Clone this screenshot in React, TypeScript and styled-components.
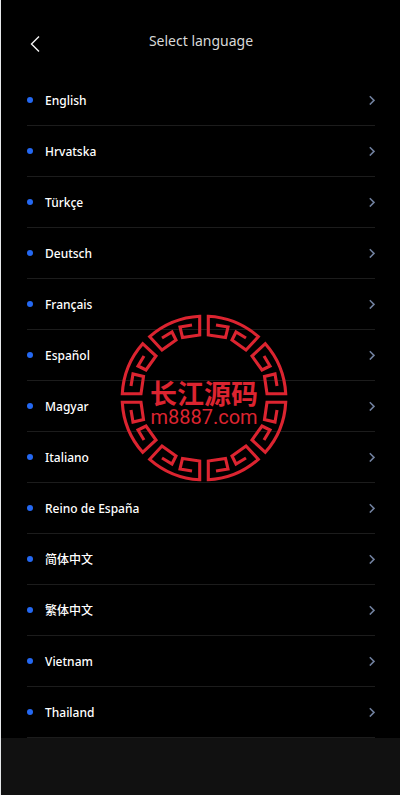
import React from 'react';
import styled, { createGlobalStyle } from 'styled-components';

const GlobalStyle = createGlobalStyle`
  * { box-sizing: border-box; }
  body {
    margin: 0;
    background: #111111;
    font-family: "Noto Sans", "Noto Sans CJK SC", sans-serif;
  }
`;

const Page = styled.div`
  position: relative;
  min-height: 100vh;
  border-left: 1px solid #e6e8ea;
  background: #111111;
`;

const Screen = styled.main`
  padding: 24px 25px 0 26px;
  background: #000000;
`;

const Header = styled.header`
  display: grid;
  grid-template-columns: 24px 1fr 24px;
  align-items: start;
  height: 51px;
`;

const BackButton = styled.button`
  display: flex;
  justify-content: flex-start;
  margin: 0;
  padding: 11px 0 0 3px;
  border: 0;
  background: none;
  color: #f4f4f4;
  cursor: pointer;
`;

const Title = styled.h1`
  margin: 5px 0 0;
  color: #d8d8d8;
  font-size: 14px;
  font-weight: 400;
  line-height: 24px;
  text-align: center;
`;

const List = styled.ul`
  margin: 0;
  padding: 0;
  list-style: none;
`;

const LanguageButton = styled.button`
  display: flex;
  align-items: center;
  width: 100%;
  height: 51px;
  padding: 0;
  border: 0;
  border-bottom: 1px solid #1c1c1c;
  background: none;
  color: #ffffff;
  font: inherit;
  font-size: 12px;
  font-weight: 500;
  text-align: left;
  cursor: pointer;
`;

const Dot = styled.span`
  width: 6px;
  height: 6px;
  margin-right: 12px;
  border-radius: 50%;
  background: #2468f2;
`;

const Name = styled.span`
  flex: 1;
`;

const Watermark = styled.svg`
  position: absolute;
  top: 314px;
  left: calc(50% + 3px);
  width: 168px;
  height: 168px;
  margin-left: -84px;
  pointer-events: none;
`;

const languages = [
  'English', 'Hrvatska', 'Türkçe', 'Deutsch', 'Français', 'Español', 'Magyar',
  'Italiano', 'Reino de España', '简体中文', '繁体中文', 'Vietnam', 'Thailand',
];

const KEY =
  'M12 -73L24 -71L21.5 -60.5L4.3 -63V-81.7A82 82 0 0 1 54.3 -61.3L42 -48L28 -58L32 -66L42 -60';

const quadrants = ['scale(1 1)', 'scale(-1 1)', 'scale(1 -1)', 'scale(-1 -1)'];

function Seal() {
  return (
    <Watermark viewBox="-84 -84 168 168" aria-hidden="true">
      <g fill="none" stroke="#dc2430" strokeWidth="3.1">
        {quadrants.map((transform) => (
          <g key={transform} transform={transform}>
            <path d={KEY} />
            <path d={KEY} transform="matrix(0 -1 -1 0 0 0)" />
          </g>
        ))}
      </g>
      <g fill="#dc2430" textAnchor="middle">
        <text y="6" fontFamily='"Noto Sans CJK SC", sans-serif' fontSize="27" fontWeight="700">长江源码</text>
        <text y="26" fontFamily="Roboto, sans-serif" fontSize="20">m8887.com</text>
      </g>
    </Watermark>
  );
}

export default function App() {
  return (
    <Page>
      <GlobalStyle />
      <Screen>
        <Header>
          <BackButton type="button" aria-label="Back">
            <svg width="10" height="18" viewBox="0 0 10 18" fill="none" stroke="currentColor" strokeWidth="1.4">
              <path d="M9 1.5L1.5 9L9 16.5" />
            </svg>
          </BackButton>
          <Title>Select language</Title>
        </Header>
        <List>
          {languages.map((language) => (
            <li key={language}>
              <LanguageButton type="button">
                <Dot />
                <Name>{language}</Name>
                <svg width="6" height="10" viewBox="0 0 6 10" fill="none" stroke="#71819f" strokeWidth="1.5">
                  <path d="M0.8 1.2L5 5.4L0.8 9.6" />
                </svg>
              </LanguageButton>
            </li>
          ))}
        </List>
      </Screen>
      <Seal />
    </Page>
  );
}
